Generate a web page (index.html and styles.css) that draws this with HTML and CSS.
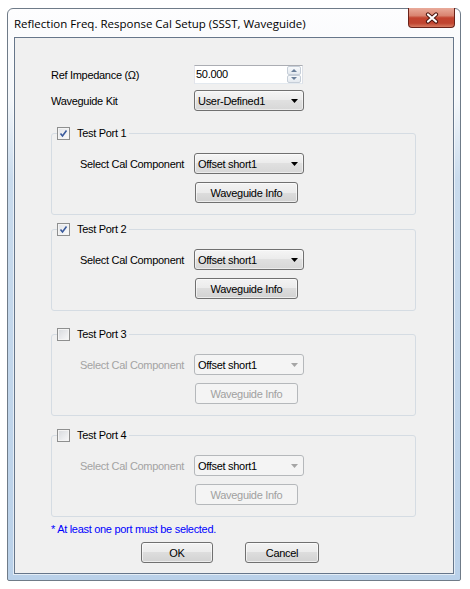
FILE: index.html
```html
<!DOCTYPE html>
<html lang="en">
    <head>
        <meta charset="UTF-8">
        <title>Reflection Freq. Response Cal Setup</title>
        <link rel="stylesheet" href="styles.css">
    </head>
    <body>

        <div class="window">

            <!-- title bar -->
            <div class="titlebar">
                <span class="title">Reflection Freq. Response Cal Setup (SSST, Waveguide)</span>
                <button class="close" type="button">
                    <svg width="14" height="12" viewBox="0 0 14 12">
                        <path d="M3 2.5 L11 9.5 M11 2.5 L3 9.5" stroke="#4a1610" stroke-width="4.2" stroke-linecap="round"/>
                        <path d="M3 2.5 L11 9.5 M11 2.5 L3 9.5" stroke="#ffffff" stroke-width="2.2" stroke-linecap="round"/>
                    </svg>
                </button>
            </div>

            <div class="client">

                <!-- reference impedance -->
                <div class="field">
                    <label>Ref Impedance (Ω)</label>
                    <div class="spin">
                        <span class="spin-value">50.000</span>
                        <span class="spin-btns">
                            <span class="spin-btn"><span class="tri-up"></span></span>
                            <span class="spin-btn"><span class="tri-down"></span></span>
                        </span>
                    </div>
                </div>

                <!-- waveguide kit -->
                <div class="field field-kit">
                    <label>Waveguide Kit</label>
                    <div class="combo">
                        <span>User-Defined1</span>
                        <svg class="arrow" width="7" height="4" viewBox="0 0 7 4"><polygon points="0,0 7,0 3.5,4"/></svg>
                    </div>
                </div>

                <!-- test port 1 -->
                <fieldset class="port port-1">
                    <legend><span class="check checked"><svg width="11" height="11" viewBox="0 0 11 11"><path d="M2.5 5.5 L4.5 8 L8.5 2.5" fill="none" stroke="#3a5a9c" stroke-width="1.6"/></svg></span>Test Port 1</legend>
                    <div class="port-body">
                        <div class="port-row">
                            <span>Select Cal Component</span>
                            <div class="combo">
                                <span>Offset short1</span>
                                <svg class="arrow" width="7" height="4" viewBox="0 0 7 4"><polygon points="0,0 7,0 3.5,4"/></svg>
                            </div>
                        </div>
                        <button class="btn btn-info" type="button">Waveguide Info</button>
                    </div>
                </fieldset>

                <!-- test port 2 -->
                <fieldset class="port port-2">
                    <legend><span class="check checked"><svg width="11" height="11" viewBox="0 0 11 11"><path d="M2.5 5.5 L4.5 8 L8.5 2.5" fill="none" stroke="#3a5a9c" stroke-width="1.6"/></svg></span>Test Port 2</legend>
                    <div class="port-body">
                        <div class="port-row">
                            <span>Select Cal Component</span>
                            <div class="combo">
                                <span>Offset short1</span>
                                <svg class="arrow" width="7" height="4" viewBox="0 0 7 4"><polygon points="0,0 7,0 3.5,4"/></svg>
                            </div>
                        </div>
                        <button class="btn btn-info" type="button">Waveguide Info</button>
                    </div>
                </fieldset>

                <!-- test port 3 -->
                <fieldset class="port port-3 disabled">
                    <legend><span class="check"></span>Test Port 3</legend>
                    <div class="port-body">
                        <div class="port-row">
                            <span>Select Cal Component</span>
                            <div class="combo">
                                <span>Offset short1</span>
                                <svg class="arrow" width="7" height="4" viewBox="0 0 7 4"><polygon points="0,0 7,0 3.5,4"/></svg>
                            </div>
                        </div>
                        <button class="btn btn-info" type="button" disabled>Waveguide Info</button>
                    </div>
                </fieldset>

                <!-- test port 4 -->
                <fieldset class="port port-4 disabled">
                    <legend><span class="check"></span>Test Port 4</legend>
                    <div class="port-body">
                        <div class="port-row">
                            <span>Select Cal Component</span>
                            <div class="combo">
                                <span>Offset short1</span>
                                <svg class="arrow" width="7" height="4" viewBox="0 0 7 4"><polygon points="0,0 7,0 3.5,4"/></svg>
                            </div>
                        </div>
                        <button class="btn btn-info" type="button" disabled>Waveguide Info</button>
                    </div>
                </fieldset>

                <p class="note">* At least one port must be selected.</p>

                <div class="actions">
                    <button class="btn btn-ok" type="button">OK</button>
                    <button class="btn btn-cancel" type="button">Cancel</button>
                </div>

            </div>
        </div>

    </body>
</html>
```

FILE: styles.css
```css
body {
    margin: 0;
    background: #ffffff;
    font-family: "Liberation Sans", Arial, sans-serif;
    font-size: 11px;
    letter-spacing: -0.3px;
    color: #000000;
}

/* window frame */
.window {
    margin: 8px 0 0 7px;
    width: 454px;
    height: 573px;
    box-sizing: border-box;
    border: 1px solid #6f7b88;
    border-radius: 6px 6px 2px 2px;
    padding: 0 6px 6px;
    display: flex;
    flex-direction: column;
    background: linear-gradient(#fdfdfe 0, #f4f7fa 90px, #c9dbed 170px, #bad1e9 100%);
}
.titlebar {
    height: 28px;
    margin: 0 -6px;
    padding: 0 5px 0 6px;
    display: flex;
    justify-content: space-between;
    align-items: center;
}
.title {
    font-family: "Open Sans", "Noto Sans", sans-serif;
    font-size: 11.5px;
    letter-spacing: 0;
}
.close {
    align-self: flex-start;
    margin-top: -1px;
    width: 47px;
    height: 20px;
    padding: 0;
    border: 1px solid #6a2219;
    border-top: none;
    border-radius: 0 0 4px 4px;
    background: linear-gradient(#e9ab9b 0%, #d98470 40%, #c2432f 52%, #c04530 80%, #d77c62 100%);
    display: flex;
    align-items: center;
    justify-content: center;
}

.client {
    flex: 1;
    border: 1px solid #66768a;
    box-shadow: 0 0 0 1px rgba(255, 255, 255, 0.6);
    background: #f0f0f0;
    padding: 27px 0 0 36px;
}

/* top fields */
.field {
    display: grid;
    grid-template-columns: 143px 110px;
    align-items: center;
}
.field-kit {
    margin-top: 6px;
}
.spin {
    width: 109px;
    height: 19px;
    box-sizing: border-box;
    border: 1px solid;
    border-color: #abadb3 #dbdfe6 #e3e9ef #e2e3ea;
    background: #ffffff;
    display: flex;
    justify-content: space-between;
}
.spin-value {
    padding-left: 1px;
    line-height: 17px;
}
.spin-btns {
    display: flex;
    flex-direction: column;
    width: 14px;
    margin-right: 1px;
}
.spin-btn {
    flex: 1;
    border: 1px solid #c6ced8;
    border-radius: 2px;
    background: linear-gradient(#f7f9fb, #e4e9ef);
    display: flex;
    align-items: center;
    justify-content: center;
}
.tri-up, .tri-down {
    width: 0;
    height: 0;
    border-left: 3px solid transparent;
    border-right: 3px solid transparent;
}
.tri-up {
    border-bottom: 3px solid #6b7f99;
}
.tri-down {
    border-top: 3px solid #6b7f99;
}

.combo {
    width: 110px;
    height: 21px;
    box-sizing: border-box;
    border: 1px solid #707070;
    border-radius: 3px;
    background: linear-gradient(#f5f5f5, #ebebeb 50%, #e0e0e0 50%, #d7d7d7);
    box-shadow: inset 0 0 0 1px rgba(255, 255, 255, 0.5);
    padding: 0 5px 0 3px;
    display: flex;
    align-items: center;
    justify-content: space-between;
}
.arrow {
    fill: #000000;
}

/* port groups */
.port {
    width: 365px;
    box-sizing: border-box;
    margin: 0;
    padding: 0;
    min-inline-size: 0;
    border: 1px solid #d5dce3;
    border-radius: 3px;
}
.port-1 { margin-top: 16px; }
.port-2 { margin-top: 8px; }
.port-3 { margin-top: 17px; }
.port-4 { margin-top: 13px; }

.port legend {
    margin-left: 5px;
    padding: 0 3px 0 0;
    line-height: 13px;
    white-space: nowrap;
}
.check {
    display: inline-block;
    vertical-align: top;
    width: 13px;
    height: 13px;
    box-sizing: border-box;
    margin-right: 7px;
    border: 1px solid #8e8f8f;
    background: linear-gradient(135deg, #d6d9dd, #f9f9fa);
    box-shadow: inset 0 0 0 1px #f4f4f4;
}
.check.checked {
    background: linear-gradient(135deg, #e2e4e8, #fbfbfb);
}
.check svg {
    display: block;
}

.port-body {
    padding: 13px 0 11px 28px;
}
.port-row {
    display: grid;
    grid-template-columns: 114px 110px;
    align-items: center;
}

.btn {
    height: 21px;
    padding: 0;
    border: 1px solid #707070;
    border-radius: 3px;
    background: linear-gradient(#f3f3f3, #ebebeb 50%, #dddddd 50%, #d2d2d2);
    box-shadow: inset 0 0 0 1px rgba(255, 255, 255, 0.6);
    font: inherit;
    letter-spacing: inherit;
    color: #000000;
}
.btn-info {
    display: block;
    width: 103px;
    margin: 8px 0 0 115px;
}

.disabled .port-row > span {
    color: #a3a3a3;
}
.disabled .combo {
    border-color: #b5b8bb;
    background: #f4f4f4;
    box-shadow: none;
}
.disabled .arrow {
    fill: #a5a5a5;
}
.btn:disabled {
    border-color: #b5b8bb;
    background: #f4f4f4;
    box-shadow: none;
    color: #a0a0a0;
}

.note {
    margin: 6px 0 0;
    line-height: 13px;
    color: #0000ff;
}

.actions {
    margin-top: 6px;
    padding-left: 90px;
    display: flex;
    gap: 32px;
}
.btn-ok {
    width: 72px;
}
.btn-cancel {
    width: 74px;
}
```
